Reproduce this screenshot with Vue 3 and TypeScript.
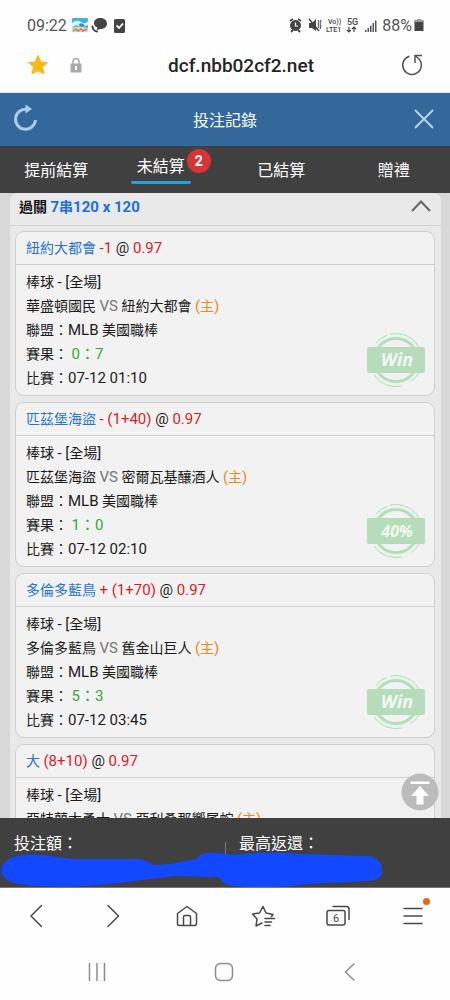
<script setup lang="ts">
interface Bet {
  pick: string
  line: string
  odds: string
  home: string
  away: string
  league?: string
  score?: string
  time?: string
  stamp?: string
}

const tabs = [
  { label: '提前結算', active: false },
  { label: '未結算', active: true, count: 2 },
  { label: '已結算', active: false },
  { label: '贈禮', active: false },
]

const bets: Bet[] = [
  { pick: '紐約大都會', line: '-1', odds: '0.97', home: '華盛頓國民', away: '紐約大都會', league: '美國職棒', score: '0：7', time: '07-12 01:10', stamp: 'Win' },
  { pick: '匹茲堡海盜', line: '- (1+40)', odds: '0.97', home: '匹茲堡海盜', away: '密爾瓦基釀酒人', league: '美國職棒', score: '1：0', time: '07-12 02:10', stamp: '40%' },
  { pick: '多倫多藍鳥', line: '+ (1+70)', odds: '0.97', home: '多倫多藍鳥', away: '舊金山巨人', league: '美國職棒', score: '5：3', time: '07-12 03:45', stamp: 'Win' },
  { pick: '大', line: '(8+10)', odds: '0.97', home: '亞特蘭大勇士', away: '亞利桑那響尾蛇' },
]
</script>

<template>
  <div class="screen">
    <div class="status">
      <span class="clock">09:22</span>
      <svg class="notif" width="56" height="18" viewBox="0 0 56 18">
        <rect x="1" y="2" width="16" height="14" rx="1" fill="#3fb4e4" />
        <path d="M1 7Q6 3 10 6T17 5V9Q12 12 8 10T1 12Z" fill="#d8f3fb" />
        <path d="M8 8Q12 6 14 10L9 12Z" fill="#3b8fd0" />
        <path d="M1 12Q7 9 17 12V16H1Z" fill="#eadb9a" />
        <path d="M2 15L5 13L7 15L10 13L12 15L16 13" fill="none" stroke="#d6679b" stroke-width="1.5" />
        <path d="M29.500 2c4 0 6.500 2.500 6.500 5.500s-2.500 5.500-6.500 5.500l-4 1 1-2.500c-2.500-1-3.500-2.500-3.500-4.500 0-3 2.500-5 6.500-5z" fill="#444" />
        <path d="M21.500 10.500Q22 15 26 15.500" fill="none" stroke="#444" stroke-width="2" stroke-linecap="round" />
        <rect x="43" y="3" width="11" height="14" rx="1.500" fill="#444" />
        <path d="M45.500 9.500L48 12L52 7.500" fill="none" stroke="#fff" stroke-width="1.800" />
      </svg>
      <svg class="signals" width="88" height="18" viewBox="0 0 88 18">
        <g fill="none" stroke="#444">
          <circle cx="6.500" cy="9.500" r="5" fill="#444" />
          <path d="M6.500 6.500V10H9" stroke="#fff" stroke-width="1.200" />
          <path d="M1 5L4 3M12 5L9 3M2 16L4 14M11 16L9 14" stroke-width="1.800" />
          <path d="M20 7H23L27 3V15L23 12H20Z" fill="#444" stroke="none" />
          <path d="M20 3L30 15" stroke-width="1.500" />
          <path d="M29 4L30 6L29 8L30 10L29 12M31.500 4L32 6L31 8L32 10L31 13" />
          <path d="M60 11V16M58 14L60 16L62 14M65 16V11M63 13L65 11L67 13" stroke-width="1.200" />
        </g>
        <g fill="#444" font-family="Roboto, sans-serif" font-size="7" font-weight="500">
          <text x="39" y="8">Vo))</text>
          <text x="37" y="16">LTE1</text>
          <text x="58" y="9" font-size="9">5G</text>
        </g>
        <path d="M76 14h1.500v2H76zM78.500 12H80v4h-1.500zM81 9.500h1.500V16H81zM83.500 7H85v9h-1.500zM86 4.500h1.500V16H86z" fill="#555" />
      </svg>
      <span class="percent">88%</span>
      <svg width="10" height="14" viewBox="0 0 10 14">
        <path d="M3 1H7V2.500H9.500V13H0.500V2.500H3Z" fill="#444" />
        <path d="M3 1H7V2.500H9.500V4H0.500V2.500H3Z" fill="#999" />
      </svg>
    </div>

    <div class="address">
      <button class="plain" aria-label="Bookmark">
        <svg width="22" height="22" viewBox="0 0 22 22"><path d="M11 1.500L13.800 8L20.500 8.500L15.500 13L17 20L11 16.500L5 20L6.500 13L1.500 8.500L8.200 8Z" fill="#fdb813" stroke="#fdb813" stroke-linejoin="round" /></svg>
      </button>
      <svg class="lock" width="12" height="16" viewBox="0 0 12 16">
        <path d="M3 7V4.500a3 3 0 0 1 6 0V7" fill="none" stroke="#aaa" stroke-width="1.500" />
        <rect x="0.500" y="6.500" width="11" height="9" rx="1" fill="#aaa" />
        <path d="M5 9H7V13H5Z" fill="#fff" />
      </svg>
      <span class="url">dcf.nbb02cf2.net</span>
      <button class="plain" aria-label="Reload">
        <svg width="24" height="24" viewBox="0 0 24 24" fill="none" stroke="#555" stroke-width="1.500">
          <path d="M9.500 3.200A9.300 9.300 0 1 0 18.500 5.500L15.500 3" /><path d="M15 10V2.500H22" />
        </svg>
      </button>
    </div>

    <header class="titlebar">
      <button class="plain" aria-label="重新整理">
        <svg width="26" height="30" viewBox="0 0 26 30" fill="none">
          <path d="M15 5.500A10 10 0 1 0 22.500 16" stroke="#a9cdec" stroke-width="3" />
          <path d="M12.500 0.500L19 5L12.500 9.500Z" fill="#a9cdec" />
        </svg>
      </button>
      <h1>投注記錄</h1>
      <button class="plain" aria-label="關閉">
        <svg width="20" height="20" viewBox="0 0 20 20"><path d="M1 1L19 19M19 1L1 19" stroke="#b5d3ea" stroke-width="2" /></svg>
      </button>
    </header>

    <nav class="tabs">
      <button v-for="t in tabs" :key="t.label" class="tab" :class="{ active: t.active }">
        <span class="tab-label">{{ t.label }}</span>
        <span v-if="t.count" class="count">{{ t.count }}</span>
      </button>
    </nav>

    <main class="content">
      <section class="panel">
        <button class="group">
          <span class="group-title">過關 <span class="combo"><span class="n">7</span>串<span class="n">120 x 120</span></span></span>
          <svg width="20" height="12" viewBox="0 0 20 12"><path d="M1 11L10 1.500L19 11" fill="none" stroke="#666" stroke-width="2" /></svg>
        </button>
        <div class="list">
          <article v-for="b in bets" :key="b.pick" class="card">
            <h2 class="pick"><span class="team">{{ b.pick }}</span> <span class="n"><span class="red">{{ b.line }}</span> @ <span class="red">{{ b.odds }}</span></span></h2>
            <div class="details">
              <p>棒球 <span class="n">- [</span>全場<span class="n">]</span></p>
              <p>{{ b.home }} <span class="n vs">VS</span> {{ b.away }} <span class="host"><span class="n">(</span>主<span class="n">)</span></span></p>
              <p v-if="b.league">聯盟：<span class="n">MLB</span> {{ b.league }}</p>
              <p v-if="b.score">賽果： <span class="n score">{{ b.score }}</span></p>
              <p v-if="b.time">比賽：<span class="n">{{ b.time }}</span></p>
            </div>
            <svg v-if="b.stamp" class="stamp" width="60" height="56" viewBox="0 0 60 56">
              <g fill="none" stroke="#b6dcbc">
                <circle cx="30" cy="28" r="24" stroke="#e8f5ea" stroke-width="4" />
                <circle cx="30" cy="28" r="21.500" stroke-width="3" />
                <path d="M24 2.200A26.500 26.500 0 0 1 54 17M10 11A26.500 26.500 0 0 1 21 3.200M8 43A26.500 26.500 0 0 0 36 54M45 49.500A26.500 26.500 0 0 0 53 41" />
              </g>
              <rect x="1" y="15" width="58" height="26" rx="2" fill="#b6dcbc" />
              <text x="31" y="34" text-anchor="middle" :class="{ small: b.stamp !== 'Win' }">{{ b.stamp }}</text>
            </svg>
          </article>
        </div>
      </section>
      <button class="plain to-top" aria-label="回到頂部">
        <svg width="38" height="38" viewBox="0 0 38 38">
          <circle cx="19" cy="19" r="18.500" fill="#bcbcbc" />
          <path d="M9.500 8.500H28.500V11H9.500ZM19 13L28 23H22.500V31.500H15.500V23H10Z" fill="#fff" />
        </svg>
      </button>
    </main>

    <footer class="totals">
      <span>投注額：</span>
      <span>最高返還：</span>
      <svg class="marker" viewBox="0 0 450 69" preserveAspectRatio="none">
        <path d="M1 52C2 43 12 38 24 37C40 35 52 39 76 41L140 41C147 42 150 46 153 47C170 47 184 43 197 41C199 36 207 34 216 35Q226 36 235 37C255 34 280 34 300 36L368 38C377 39 382 45 382 52C382 59 377 63 368 63L307 66C285 70 240 71 226 66C222 64 221 60 218 59L175 58C145 61 125 65 99 67C70 70 38 69 19 66C7 64 1 59 1 52Z" fill="#1248ff" />
      </svg>
    </footer>

    <nav class="browser">
      <button class="plain" aria-label="Back"><svg width="28" height="28" viewBox="0 0 28 28"><path d="M18.500 3.500L8 14L18.500 24.500" /></svg></button>
      <button class="plain" aria-label="Forward"><svg width="28" height="28" viewBox="0 0 28 28"><path d="M10 3.500L20.500 14L10 24.500" /></svg></button>
      <button class="plain" aria-label="Home"><svg width="28" height="28" viewBox="0 0 28 28"><path d="M4.500 11.500L14 4.500L23.500 11.500V21.500Q23.500 23.500 21.500 23.500H6.500Q4.500 23.500 4.500 21.500ZM10.500 23V15Q10.500 13.500 12 13.500H16Q17.500 13.500 17.500 15V23" /></svg></button>
      <button class="plain" aria-label="Bookmarks"><svg width="28" height="28" viewBox="0 0 28 28"><path d="M13 21L7 24L8 17L3.500 12L10.500 11L14 4.500L17 11L24 12.500L22.500 14.500M16 16.500H25.500M16 20H22.500M16 23.500H21" /></svg></button>
      <button class="plain" aria-label="Tabs"><svg width="28" height="28" viewBox="0 0 28 28"><rect x="3" y="8.500" width="18" height="14.500" rx="2" /><path d="M9 4.500H22.500Q25 4.500 25 7V17.500" /><text x="12" y="20" text-anchor="middle">6</text></svg></button>
      <button class="plain menu" aria-label="Menu"><svg width="28" height="28" viewBox="0 0 28 28"><path d="M5 6.500H23M5 14H23M5 21.500H23" /></svg><i class="dot"></i></button>
    </nav>

    <nav class="system">
      <button class="plain" aria-label="Recents"><svg width="20" height="20" viewBox="0 0 20 20"><path d="M2.500 1V19M10 1V19M17.500 1V19" /></svg></button>
      <button class="plain" aria-label="Home screen"><svg width="20" height="20" viewBox="0 0 20 20"><rect x="1.500" y="1.500" width="17" height="17" rx="5" /></svg></button>
      <button class="plain" aria-label="System back"><svg width="20" height="20" viewBox="0 0 20 20"><path d="M14.500 1.500L5.500 10L14.500 18.500" /></svg></button>
    </nav>
  </div>
</template>

<style>
body {
  margin: 0;
}
</style>

<style scoped>
* {
  box-sizing: border-box;
}
.screen {
  display: flex;
  flex-direction: column;
  height: 100vh;
  background: #fefefe;
  font-family: Roboto, "Noto Sans CJK TC", sans-serif;
  color: #1c1c1c;
}
button {
  font: inherit;
  border: 0;
  background: none;
  padding: 0;
}
.plain {
  display: flex;
}
svg {
  display: block;
  flex: none;
}
.status {
  display: flex;
  align-items: center;
  height: 48px;
  padding: 2px 26px 0 27px;
  font-size: 16px;
  color: #555;
}
.notif {
  margin-left: 4px;
}
.signals {
  margin-left: auto;
}
.percent {
  margin: 0 2px 0 5px;
}
.address {
  display: flex;
  align-items: center;
  height: 45px;
  padding: 0 26px 10px 27px;
  border-bottom: 1px solid #dcebf5;
}
.lock {
  margin-left: 21px;
}
.url {
  flex: 1;
  text-align: center;
  font-size: 19px;
  font-weight: 500;
  color: #252525;
}
.titlebar {
  display: flex;
  align-items: center;
  justify-content: space-between;
  height: 53px;
  padding: 0 16px 2px 13px;
  background: #34689b;
  color: #fff;
}
h1 {
  margin: 0;
  padding-right: 3px;
  font-size: 16px;
  font-weight: 400;
}
.tabs {
  display: grid;
  grid-template-columns: repeat(4, 1fr);
  height: 47px;
  padding-bottom: 2px;
  background: #404040;
}
.tab {
  display: flex;
  align-items: center;
  justify-content: center;
  color: #fff;
  font-size: 16px;
}
.active .tab-label {
  width: 60px;
  line-height: 28px;
  border-bottom: 3px solid #1ea0e6;
  border-radius: 2px;
}
.count {
  width: 24px;
  height: 24px;
  margin: 0 -4px 16px;
  border-radius: 50%;
  background: #d53438;
  font-size: 14px;
  font-weight: 700;
  line-height: 24px;
}
.content {
  position: relative;
  flex: 1;
  min-height: 0;
  overflow-x: hidden;
  overflow-y: auto;
  scrollbar-width: none;
  padding: 0 9px 0 10px;
  background: #d8d8d8;
}
.panel {
  background: #e9e9e9;
  border-radius: 8px 8px 0 0;
}
.group {
  display: flex;
  align-items: center;
  justify-content: space-between;
  width: 100%;
  height: 33px;
  padding: 0 10px 6px 9px;
  border-bottom: 1px solid #d4d4d4;
  color: #111;
}
.group-title {
  font-size: 14px;
  font-weight: 700;
}
.combo {
  color: #1a6fe8;
}
.n {
  font-size: 15px;
}
.list {
  display: flex;
  flex-direction: column;
  gap: 6px;
  padding: 5px 6px 0 5px;
}
.card {
  position: relative;
  border: 1px solid #cfcfcf;
  border-radius: 9px;
  background: #f2f2f2;
  font-size: 14px;
}
.pick {
  margin: 0;
  height: 33px;
  padding: 0 10px;
  border-bottom: 1px solid #cfcfcf;
  font-size: 14px;
  font-weight: 400;
  line-height: 32px;
}
.team {
  color: #2a74d0;
}
.red {
  color: #dc1c28;
}
.details {
  padding: 5px 10px;
}
p {
  margin: 0;
  height: 24px;
  line-height: 24px;
  white-space: nowrap;
  word-spacing: normal;
}
.vs {
  color: #777;
}
.host {
  color: #ee8a1c;
}
.score {
  color: #35a835;
}
.stamp {
  position: absolute;
  right: 8px;
  bottom: 7px;
}
.stamp text {
  font: italic 700 18px "Open Sans", sans-serif;
  fill: #f1faf2;
}
.stamp .small {
  font-size: 16px;
}
.to-top {
  position: absolute;
  right: 11px;
  bottom: 7px;
}
.totals {
  position: relative;
  display: grid;
  grid-template-columns: 1fr 1fr;
  height: 70px;
  border-bottom: 1px solid #777;
  background: #404040;
  color: #fff;
  font-size: 16px;
  line-height: 20px;
}
.totals span {
  height: 20px;
  margin-top: 16px;
  padding-left: 14px;
}
.totals span + span {
  background: linear-gradient(#777, #777) 0 100% / 1px 12px no-repeat;
}
.marker {
  position: absolute;
  left: 0;
  top: 0;
  width: 100%;
  height: 100%;
}
.browser {
  display: flex;
  align-items: center;
  justify-content: space-between;
  height: 56px;
  padding: 0 23px;
}
.browser svg {
  fill: none;
  stroke: #484848;
  stroke-width: 1.5;
  stroke-linecap: round;
  stroke-linejoin: round;
}
.browser text {
  font: 11px Roboto, sans-serif;
  fill: #484848;
  stroke: none;
}
.menu {
  position: relative;
}
.dot {
  position: absolute;
  top: -4px;
  right: -3px;
  width: 7px;
  height: 7px;
  border-radius: 50%;
  background: #ee6314;
}
.system {
  display: flex;
  align-items: center;
  justify-content: space-between;
  height: 56px;
  padding: 0 90px 0 87px;
}
.system svg {
  fill: none;
  stroke: #8e8e8e;
  stroke-width: 1.5;
}
</style>
